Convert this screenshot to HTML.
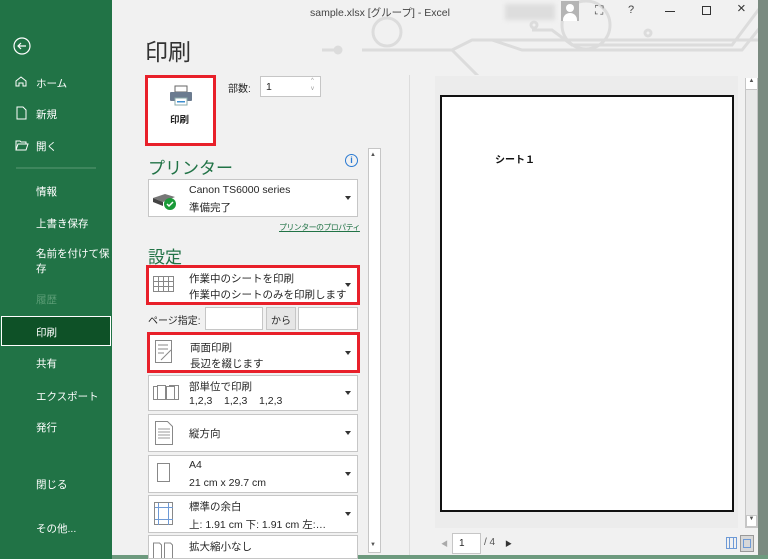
<!DOCTYPE html>
<html><head><meta charset="utf-8"><style>
*{margin:0;padding:0;box-sizing:border-box}
body{width:768px;height:559px;overflow:hidden;background:#f1f1f1;font-family:"Liberation Sans","Noto Sans CJK JP",sans-serif;position:relative;color:#262626}
.a{position:absolute;white-space:nowrap}
.side{left:0;top:0;width:112px;height:559px;background:#217346}
.si{position:absolute;left:36px;color:#fff;font-size:10.5px}
.dd{position:absolute;background:#fff;border:1px solid #c6c6c6;font-size:10.5px;white-space:nowrap}
.dd .t1{position:absolute;left:40px;top:5px}
.dd .t2{position:absolute;left:40px;top:21px}
.dd .ar{position:absolute;right:6px;top:50%;margin-top:-2px;border-left:3px solid transparent;border-right:3px solid transparent;border-top:4px solid #333}
.red{position:absolute;border:3px solid #e8202a}
</style></head><body>
<div class="a side"></div>
<svg class="a" style="left:0;top:0" width="112" height="559">
<circle cx="22" cy="46" r="8" fill="none" stroke="#fff" stroke-width="1.2"/>
<path d="M26 46H18M21 43l-3 3 3 3" fill="none" stroke="#fff" stroke-width="1.2"/>
<path d="M16 86v-5l5-4 5 4v5h-3v-3h-4v3z" fill="none" stroke="#fff"/>
<path d="M17 107h6l3 3v9h-9z" fill="none" stroke="#fff"/>
<path d="M16 150v-9h4l1 1h5v2M16 150l2-6h10l-2 6z" fill="none" stroke="#fff"/>
<line x1="16" y1="168" x2="96" y2="168" stroke="#5a9a74"/>
<rect x="1.5" y="316.5" width="109" height="29" fill="#0e5127" stroke="#fff"/>
</svg>
<div class="si" style="top:76px">ホーム</div>
<div class="si" style="top:107px">新規</div>
<div class="si" style="top:139px">開く</div>
<div class="si" style="top:184px">情報</div>
<div class="si" style="top:216px">上書き保存</div>
<div class="si" style="top:247px;line-height:15px">名前を付けて保<br>存</div>
<div class="si" style="top:292px;color:#5b9c75">履歴</div>
<div class="si" style="top:325px">印刷</div>
<div class="si" style="top:356px">共有</div>
<div class="si" style="top:389px">エクスポート</div>
<div class="si" style="top:420px">発行</div>
<div class="si" style="top:477px">閉じる</div>
<div class="si" style="top:521px">その他...</div>

<svg class="a" style="left:112px;top:0" width="646" height="75">
<g fill="none" stroke="#dcdcdc" stroke-width="3">
<circle cx="275" cy="32" r="14"/><path d="M250 50H340l30 30M340 50l20-10h300"/>
<circle cx="474" cy="25" r="24"/><path d="M420 30h20l20 15h160l30-40M380 40l30 10h220l40-50"/>
<path d="M230 50h-20"/><circle cx="226" cy="50" r="3"/><circle cx="422" cy="25" r="3"/><circle cx="536" cy="33" r="3"/>
</g></svg>
<div class="a" style="left:310px;top:5px;font-size:10.5px;color:#444">sample.xlsx [グループ] - Excel</div>
<div class="a" style="left:505px;top:4px;width:50px;height:16px;background:#ddd;filter:blur(2px)"></div>
<div class="a" style="left:561px;top:1px;width:18px;height:20px;background:#b5b5b5"></div>
<div class="a" style="left:566px;top:4px;width:8px;height:8px;border-radius:50%;background:#fff"></div>
<div class="a" style="left:563px;top:13px;width:14px;height:8px;border-radius:7px 7px 0 0;background:#fff"></div>
<div class="a" style="left:595px;top:3px;font-size:12px;color:#444">⛶</div>
<div class="a" style="left:628px;top:4px;font-size:11px;color:#444">?</div>
<div class="a" style="left:665px;top:11px;width:10px;height:1px;background:#333"></div>
<div class="a" style="left:702px;top:6px;width:9px;height:9px;border:1px solid #333"></div>
<div class="a" style="left:737px;top:0px;font-size:15px;color:#333">×</div>
<div class="a" style="left:758px;top:0;width:10px;height:559px;background:#7a8a80"></div>
<div class="a" style="left:112px;top:555px;width:656px;height:4px;background:#6d9a7e"></div>

<div class="a" style="left:145px;top:33px;font-size:23px;color:#333">印刷</div>
<div class="a" style="left:145px;top:75px;width:71px;height:71px;background:#fff;border:3px solid #e8202a"></div>
<svg class="a" style="left:169px;top:85px" width="24" height="22"><rect x="6" y="1" width="12" height="6" fill="#fff" stroke="#666"/><rect x="1" y="7" width="22" height="9" rx="1" fill="#6b7b8f"/><rect x="6" y="13" width="12" height="7" fill="#fff" stroke="#8aa"/><rect x="8" y="16" width="8" height="1.5" fill="#3c8fd0"/></svg>
<div class="a" style="left:170px;top:112px;font-size:9.5px;font-weight:bold">印刷</div>
<div class="a" style="left:228px;top:80px;font-size:10px">部数:</div>
<div class="a" style="left:260px;top:76px;width:61px;height:21px;background:#fff;border:1px solid #c6c6c6;font-size:10.5px;padding:4px 5px">1</div>
<div class="a" style="left:311px;top:77px;font-size:6px;color:#999;line-height:8px">^<br>v</div>

<div class="a" style="left:148px;top:154px;font-size:17px;color:#217346">プリンター</div>
<div class="a" style="left:345px;top:154px;width:13px;height:13px;border:1px solid #2a7ad2;border-radius:50%;font-size:9px;color:#2a7ad2;text-align:center;line-height:11px;font-weight:bold">i</div>
<div class="dd" style="left:148px;top:179px;width:210px;height:38px"><span class="t1" style="top:4px">Canon TS6000 series</span><span class="t2" style="top:20px">準備完了</span><i class="ar"></i></div>
<svg class="a" style="left:151px;top:190px" width="28" height="22"><path d="M2 8l12-4 10 3-12 5z" fill="#777"/><path d="M2 8l10 4v4L2 12z" fill="#444"/><circle cx="19" cy="14" r="6" fill="#1a9a38"/><path d="M16 14l2 2 4-4" stroke="#fff" stroke-width="1.5" fill="none"/></svg>
<div class="a" style="left:279px;top:222px;font-size:8px;letter-spacing:-0.6px;color:#217346;text-decoration:underline">プリンターのプロパティ</div>
<div class="a" style="left:148px;top:243px;font-size:17px;color:#217346">設定</div>

<div class="dd" style="left:148px;top:267px;width:210px;height:36px"><span class="t1" style="top:3px">作業中のシートを印刷</span><span class="t2" style="top:19px">作業中のシートのみを印刷します</span><i class="ar"></i></div>
<svg class="a" style="left:152px;top:273px" width="24" height="22" fill="none" stroke="#888"><rect x="1.5" y="3.5" width="20" height="15"/><path d="M1.5 8.5h20M1.5 13.5h20M6.5 3.5v15M11.5 3.5v15M16.5 3.5v15"/></svg>
<div class="red" style="left:146px;top:265px;width:214px;height:40px"></div>

<div class="a" style="left:148px;top:312px;font-size:10px">ページ指定:</div>
<div class="a" style="left:205px;top:307px;width:58px;height:23px;background:#fff;border:1px solid #c6c6c6"></div>
<div class="a" style="left:266px;top:307px;width:30px;height:23px;background:#e6e6e6;border:1px solid #c6c6c6;font-size:10px;padding:4px 0;text-align:center">から</div>
<div class="a" style="left:298px;top:307px;width:60px;height:23px;background:#fff;border:1px solid #c6c6c6"></div>

<div class="dd" style="left:149px;top:334px;width:209px;height:37px"><span class="t1">両面印刷</span><span class="t2">長辺を綴じます</span><i class="ar"></i></div>
<svg class="a" style="left:153px;top:339px" width="22" height="26" fill="none" stroke="#888"><path d="M2.5 1.5h16v22h-16z"/><path d="M5 6h10M5 10h10M5 14h6M8 21l10-10"/></svg>
<div class="red" style="left:147px;top:332px;width:213px;height:41px"></div>

<div class="dd" style="left:148px;top:375px;width:210px;height:36px"><span class="t1" style="top:3px">部単位で印刷</span><span class="t2" style="top:19px">1,2,3&nbsp;&nbsp;&nbsp;&nbsp;1,2,3&nbsp;&nbsp;&nbsp;&nbsp;1,2,3</span><i class="ar"></i></div>
<svg class="a" style="left:152px;top:383px" width="28" height="20" fill="#fff" stroke="#888"><rect x="1.5" y="3.5" width="8" height="13"/><rect x="5.5" y="2.5" width="8" height="14"/><rect x="17.5" y="2.5" width="9" height="14"/><rect x="14.5" y="3.5" width="8" height="13"/></svg>
<div class="dd" style="left:148px;top:414px;width:210px;height:38px"><span class="t1" style="top:11px">縦方向</span><i class="ar"></i></div>
<svg class="a" style="left:154px;top:420px" width="20" height="26" fill="#fff" stroke="#888"><path d="M1.5 1.5h12l5 5v18h-17z"/><path d="M4 9h12M4 12h12M4 15h12M4 18h12" stroke="#999"/></svg>
<div class="dd" style="left:148px;top:455px;width:210px;height:38px"><span class="t1" style="top:3px">A4</span><span class="t2">21 cm x 29.7 cm</span><i class="ar"></i></div>
<div class="a" style="left:157px;top:463px;width:13px;height:19px;border:1px solid #888;background:#fff"></div>
<div class="dd" style="left:148px;top:495px;width:210px;height:38px"><span class="t1" style="top:3px">標準の余白</span><span class="t2">上: 1.91 cm 下: 1.91 cm 左:…</span><i class="ar"></i></div>
<svg class="a" style="left:154px;top:502px" width="20" height="24" fill="none"><rect x="0.5" y="0.5" width="18" height="22" stroke="#888"/><path d="M4.5 1v22M14.5 1v22M1 5.5h18M1 17.5h18" stroke="#6e9ad6"/></svg>
<div class="dd" style="left:148px;top:535px;width:210px;height:24px"><span class="t1" style="top:3px">拡大縮小なし</span></div>
<svg class="a" style="left:152px;top:540px" width="24" height="19" fill="none" stroke="#888"><path d="M1.5 18v-15h6l2 2v13M12.5 18v-15h6l2 2v13"/></svg>

<div class="a" style="left:368px;top:148px;width:13px;height:405px;background:#fff;border:1px solid #c6c6c6"></div>
<div class="a" style="left:370px;top:152px;font-size:6px;color:#555">▲</div>
<div class="a" style="left:370px;top:542px;font-size:6px;color:#555">▼</div>

<div class="a" style="left:409px;top:75px;width:1px;height:480px;background:#dcdcdc"></div>
<div class="a" style="left:435px;top:76px;width:303px;height:452px;background:#ececec"></div>
<div class="a" style="left:440px;top:95px;width:294px;height:417px;background:#fff;border:2px solid #111"></div>
<div class="a" style="left:495px;top:151px;font-size:10px;font-weight:bold;color:#111">シート１</div>
<div class="a" style="left:745px;top:78px;width:13px;height:450px;background:#e8e8e8;border:1px solid #c6c6c6"></div>
<div class="a" style="left:746px;top:78px;width:11px;height:12px;background:#fff;border-bottom:1px solid #c6c6c6;font-size:6px;color:#555;text-align:center">▲</div>
<div class="a" style="left:746px;top:515px;width:11px;height:12px;background:#fff;border:1px solid #c6c6c6;font-size:6px;color:#555;text-align:center">▼</div>
<div class="a" style="left:441px;top:539px;font-size:7px;color:#aaa">◀</div>
<div class="a" style="left:452px;top:533px;width:29px;height:21px;background:#fff;border:1px solid #c6c6c6;font-size:10px;padding:4px 6px">1</div>
<div class="a" style="left:484px;top:537px;font-size:10px;color:#555">/ 4</div>
<div class="a" style="left:505px;top:539px;font-size:7px;color:#333">▶</div>
<svg class="a" style="left:725px;top:534px" width="30" height="20" fill="none"><rect x="1.5" y="3.5" width="10" height="11" stroke="#6e9ad6"/><path d="M4.5 3v12M8.5 3v12" stroke="#6e9ad6"/><rect x="15.5" y="1.5" width="13" height="16" fill="#d8d8d8" stroke="#999"/><rect x="18.5" y="5.5" width="7" height="8" stroke="#6e9ad6"/></svg>
</body></html>
